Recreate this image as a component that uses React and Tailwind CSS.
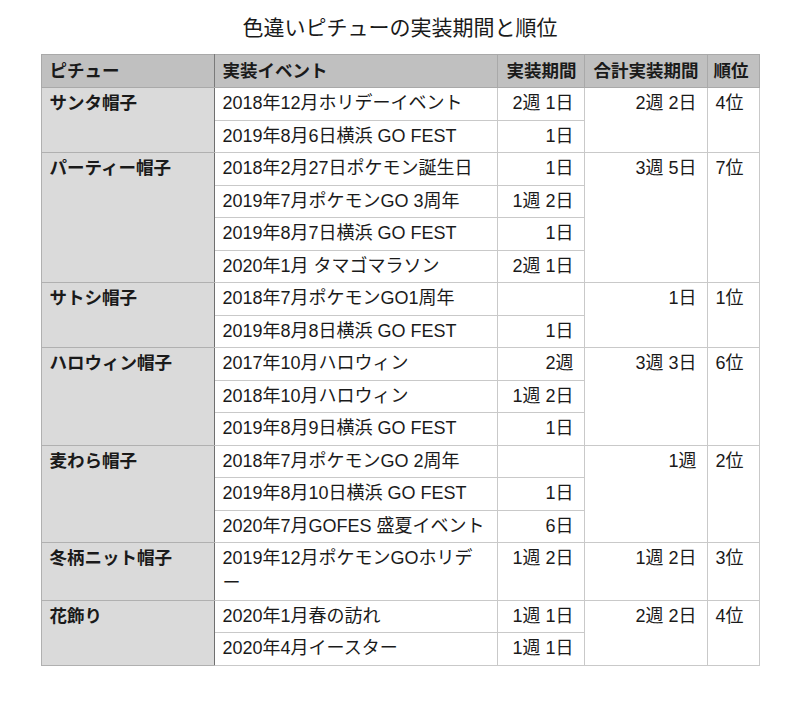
import React from 'react';

const groups = [
  {
    name: 'サンタ帽子', total: '2週 2日', rank: '4位',
    events: [['2018年12月ホリデーイベント', '2週 1日'], ['2019年8月6日横浜 GO FEST', '1日']],
  },
  {
    name: 'パーティー帽子', total: '3週 5日', rank: '7位',
    events: [
      ['2018年2月27日ポケモン誕生日', '1日'],
      ['2019年7月ポケモンGO 3周年', '1週 2日'],
      ['2019年8月7日横浜 GO FEST', '1日'],
      ['2020年1月 タマゴマラソン', '2週 1日'],
    ],
  },
  {
    name: 'サトシ帽子', total: '1日', rank: '1位',
    events: [['2018年7月ポケモンGO1周年', ''], ['2019年8月8日横浜 GO FEST', '1日']],
  },
  {
    name: 'ハロウィン帽子', total: '3週 3日', rank: '6位',
    events: [
      ['2017年10月ハロウィン', '2週'],
      ['2018年10月ハロウィン', '1週 2日'],
      ['2019年8月9日横浜 GO FEST', '1日'],
    ],
  },
  {
    name: '麦わら帽子', total: '1週', rank: '2位',
    events: [
      ['2018年7月ポケモンGO 2周年', ''],
      ['2019年8月10日横浜 GO FEST', '1日'],
      ['2020年7月GOFES 盛夏イベント', '6日'],
    ],
  },
  {
    name: '冬柄ニット帽子', total: '1週 2日', rank: '3位',
    events: [[<>2019年12月ポケモンGOホリデ<br />ー</>, '1週 2日']],
  },
  {
    name: '花飾り', total: '2週 2日', rank: '4位',
    events: [['2020年1月春の訪れ', '1週 1日'], ['2020年4月イースター', '1週 1日']],
  },
];

const cell = 'border border-[#c9c9c9] px-[8px] py-[3.25px] leading-[25px] align-top whitespace-nowrap';
const head = 'border border-[#a9a9a9] py-[3.5px] leading-[25px] whitespace-nowrap text-[17.5px]';

export default function App() {
  return (
    <div
      className="w-[800px] h-[707px] bg-white text-[#1a1a1a]"
      style={{ fontFamily: '"Liberation Sans", "Noto Sans CJK JP", sans-serif' }}
    >
      <div className="h-[54px] flex items-center justify-center text-[21px] pt-[1px]">
        色違いピチューの実装期間と順位
      </div>
      <table className="mx-auto w-[718px] border-collapse table-fixed text-[18px] border border-[#b3b3b3]">
        <colgroup>
          <col className="w-[173px]" />
          <col className="w-[283px]" />
          <col className="w-[87px]" />
          <col className="w-[123px]" />
          <col className="w-[52px]" />
        </colgroup>
        <thead>
          <tr className="bg-[#c0c0c0] font-bold">
            <th className={head + ' border-r-[#7a7a7a] px-[8px] text-left'}>ピチュー</th>
            <th className={head + ' px-[8px] text-left'}>実装イベント</th>
            <th className={head + ' px-[9px] text-right'}>実装期間</th>
            <th className={head + ' px-[9px] text-right'}>合計実装期間</th>
            <th className={head + ' px-[6px] text-left'}>順位</th>
          </tr>
        </thead>
        <tbody>
          {groups.map((g) =>
            g.events.map(([ev, dur], i) => (
              <tr key={g.name + i}>
                {i === 0 && (
                  <td
                    rowSpan={g.events.length}
                    className="border border-[#b0b0b0] border-r-[#6f6f6f] bg-[#dadada] px-[8px] py-[3.25px] leading-[25px] align-top font-bold text-[17.5px]"
                  >
                    {g.name}
                  </td>
                )}
                <td className={cell}>{ev}</td>
                <td className={cell + ' text-right pr-[10px]'}>{dur}</td>
                {i === 0 && (
                  <>
                    <td rowSpan={g.events.length} className={cell + ' text-right pr-[10px]'}>
                      {g.total}
                    </td>
                    <td rowSpan={g.events.length} className={cell + ' px-[6px]'}>
                      {g.rank}
                    </td>
                  </>
                )}
              </tr>
            ))
          )}
        </tbody>
      </table>
    </div>
  );
}
